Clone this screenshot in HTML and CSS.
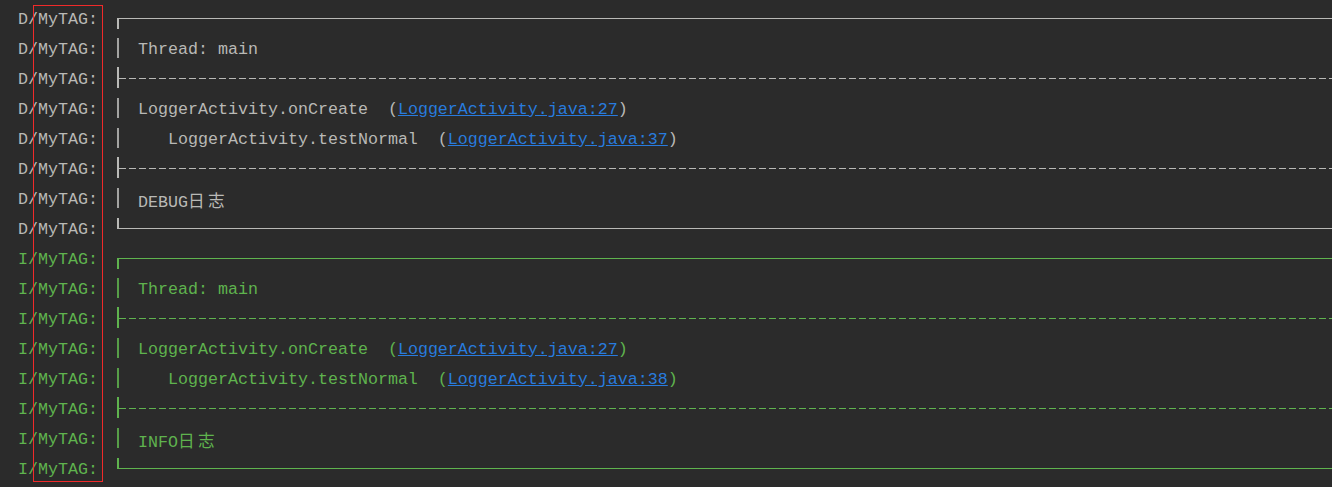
FILE: index.html
```html
<!DOCTYPE html>
<html lang="zh">
<head>
<meta charset="utf-8">
<title>Logcat</title>
<link rel="stylesheet" href="styles.css">
</head>
<body>
<div class="log">
  <div class="row d"><span class="tag">D/MyTAG:</span><span class="top"></span></div>
  <div class="row d"><span class="tag">D/MyTAG:</span><span class="bar"></span><span class="msg"> Thread: main</span></div>
  <div class="row d"><span class="tag">D/MyTAG:</span><span class="mid"></span></div>
  <div class="row d"><span class="tag">D/MyTAG:</span><span class="bar"></span><span class="msg"> LoggerActivity.onCreate  (<a class="link" href="#">LoggerActivity.java:27</a>)</span></div>
  <div class="row d"><span class="tag">D/MyTAG:</span><span class="bar"></span><span class="msg">    LoggerActivity.testNormal  (<a class="link" href="#">LoggerActivity.java:37</a>)</span></div>
  <div class="row d"><span class="tag">D/MyTAG:</span><span class="mid"></span></div>
  <div class="row d"><span class="tag">D/MyTAG:</span><span class="bar"></span><span class="msg"> DEBUG<span class="cjk">日志</span></span></div>
  <div class="row d"><span class="tag">D/MyTAG:</span><span class="bot"></span></div>
  <div class="row i"><span class="tag">I/MyTAG:</span><span class="top"></span></div>
  <div class="row i"><span class="tag">I/MyTAG:</span><span class="bar"></span><span class="msg"> Thread: main</span></div>
  <div class="row i"><span class="tag">I/MyTAG:</span><span class="mid"></span></div>
  <div class="row i"><span class="tag">I/MyTAG:</span><span class="bar"></span><span class="msg"> LoggerActivity.onCreate  (<a class="link" href="#">LoggerActivity.java:27</a>)</span></div>
  <div class="row i"><span class="tag">I/MyTAG:</span><span class="bar"></span><span class="msg">    LoggerActivity.testNormal  (<a class="link" href="#">LoggerActivity.java:38</a>)</span></div>
  <div class="row i"><span class="tag">I/MyTAG:</span><span class="mid"></span></div>
  <div class="row i"><span class="tag">I/MyTAG:</span><span class="bar"></span><span class="msg"> INFO<span class="cjk">日志</span></span></div>
  <div class="row i"><span class="tag">I/MyTAG:</span><span class="bot"></span></div>
  <div class="highlight"></div>
</div>
</body>
</html>
```

FILE: styles.css
```css
html, body {
  margin: 0;
  padding: 0;
  background: #2b2b2b;
  overflow: hidden;
}

.log {
  position: relative;
  padding-top: 5px;
  font-family: "Liberation Mono", "DejaVu Sans Mono", monospace;
  font-size: 16.67px;
}

.row {
  display: flex;
  height: 30px;
  line-height: 30px;
  white-space: pre;
}

.row.d { color: #b9b9b6; }
.row.i { color: #5fb34e; }

.tag {
  flex: none;
  box-sizing: border-box;
  width: 108px;
  padding-left: 18px;
}

.bar {
  flex: none;
  width: 2px;
  height: 20px;
  margin: 3px 9px 0 9px;
  background: currentColor;
  opacity: 0.85;
}

.msg {
  flex: none;
}

.top {
  flex: 1;
  height: 10px;
  margin: 13px 0 0 9px;
  border-top: 1px solid currentColor;
  border-left: 2px solid currentColor;
}

.mid {
  flex: 1;
  height: 21px;
  margin: 2px 0 0 9px;
  border-left: 2px solid currentColor;
  background-image: repeating-linear-gradient(90deg, currentColor 0 7px, transparent 7px 10px);
  background-size: 100% 1px;
  background-position: 0 11px;
  background-repeat: no-repeat;
}

.bot {
  flex: 1;
  height: 10px;
  margin: 3px 0 0 9px;
  border-left: 2px solid currentColor;
  border-bottom: 1px solid currentColor;
}

.link {
  color: #287bde;
  text-decoration: underline;
}

.cjk {
  font-family: "Noto Sans CJK SC", sans-serif;
  letter-spacing: 3.33px;
}

.highlight {
  position: absolute;
  left: 33px;
  top: 5px;
  width: 68px;
  height: 475px;
  border: 1px solid #f02a2a;
}
```
